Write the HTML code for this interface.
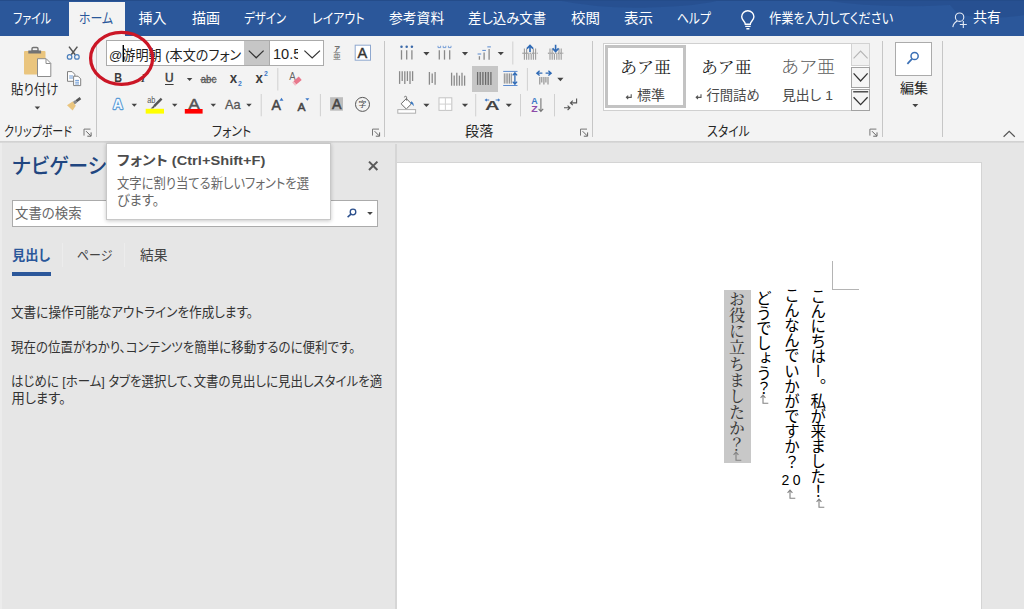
<!DOCTYPE html>
<html lang="ja"><head><meta charset="utf-8"><title>Word</title>
<style>

html,body{margin:0;padding:0}
body{width:1024px;height:609px;overflow:hidden;position:relative;background:#e6e6e6;font-family:"Liberation Sans","Noto Sans CJK JP",sans-serif;font-feature-settings:"palt" 1}
div,span,svg{position:absolute;box-sizing:border-box}
.t{white-space:nowrap;line-height:1;transform-origin:0 50%;display:block}
#hdr{left:0;top:0;width:1024px;height:36px;background:#2b579a;overflow:hidden}
#tab{left:69px;top:2px;width:56px;height:35px;background:#f3f3f3}
#rib{left:0;top:36px;width:1024px;height:105px;background:#f3f3f3}
#ribline{left:0;top:141px;width:1024px;height:2px;background:linear-gradient(#cfcfcf,#dcdcdc)}
.gs{width:1px;background:#c6c6c6;top:41px;height:96px}
.ss{width:1px;background:#d4d4d4}
#nav{left:0;top:143px;width:395px;height:466px;background:#e6e6e6;border-left:2px solid #ececec}
#navb{left:395px;top:144px;width:2px;height:465px;background:#d6d6d6}
#page{left:397px;top:162px;width:585px;height:447px;background:#fff;border-top:1px solid #d4d4d4;border-right:1px solid #d4d4d4}
#tip{left:106px;top:143px;width:225px;height:76.5px;background:#fff;border:1px solid #c8c8c8;box-shadow:0 1px 4px rgba(0,0,0,.22)}
#search{left:12px;top:200px;width:366px;height:27px;background:#fff;border:1px solid #ababab}
#navul{left:12px;top:272px;width:39px;height:4px;background:#2b579a}
#fcombo{left:106px;top:40px;width:164px;height:26px;background:#fff;border:1px solid #ababab}
#fbtn{left:244px;top:41px;width:25px;height:24px;background:#c6c6c6}
#scombo{left:269px;top:40px;width:55px;height:26px;background:#fff;border:1px solid #ababab}
#sclip{left:270px;top:42px;width:28px;height:23px;overflow:hidden}
#gal{left:603px;top:42.6px;width:267px;height:68.2px;background:#fff;border:1px solid #d0d0d0}
#gsel{left:605px;top:45px;width:81px;height:62.5px;border:3.6px solid #c3c3c3;background:#fff}
.sb{left:851px;width:19px;border:1px solid #ababab;background:#fff}
#edit{left:895px;top:42px;width:37px;height:34px;background:#fff;border:1px solid #ababab}
#jsel{left:472px;top:66px;width:26px;height:26px;background:#c6c6c6}
.vt{writing-mode:vertical-rl;white-space:nowrap;color:#000;line-height:1;font-feature-settings:normal}
.vc{writing-mode:vertical-rl;line-height:20px;width:20px;white-space:nowrap;font-feature-settings:normal;display:block}
.vc span{position:static}
.vc .tcy{display:inline-block;writing-mode:horizontal-tb;position:relative;letter-spacing:3.3px;font-size:14px;line-height:14px;height:14px;width:18px;left:-3.4px;top:-0.6px;vertical-align:middle}

</style></head>
<body>

<div id="hdr"><svg style="left:0;top:0" width="1024" height="36" viewBox="0 0 1024 36"><path d="M556 0Q600 9 650 7.5T720 0zM822 0Q880 9 950 5L958 14Q990 21 1024 15V0z" fill="#1f4580" opacity="0.35"/><path d="M0 .5H1024" stroke="#244c8a" stroke-width="1"/></svg><div id="tab"></div></div>
<div id="rib"></div>
<div id="ribline"></div>
<div class="gs" style="left:96px"></div>
<div class="gs" style="left:384px"></div>
<div class="gs" style="left:592px"></div>
<div class="gs" style="left:882px"></div>
<div class="gs" style="left:942px"></div>
<div id="fcombo"></div><div id="fbtn"></div><div id="scombo"></div>
<div id="sclip"><span class="t" style="left:3px;top:5px;font-size:14.6px;color:#222">10.5</span></div>
<div id="jsel"></div>
<div id="gal"></div><div id="gsel"></div>
<div class="sb" style="top:43px;height:23.4px;background:#f1f1f1;border-color:#d2d2d2"></div>
<div class="sb" style="top:67.2px;height:20.6px;background:#f5f5f5;border-color:#a2a2a2"></div>
<div class="sb" style="top:88.8px;height:22px;background:#f5f5f5;border-color:#a2a2a2"></div>
<div id="edit"></div>
<div id="nav"></div><div id="navb"></div>
<div id="search"></div><div id="navul"></div>
<div id="page"></div>
<svg id="ic" font-family="Liberation Sans,Noto Sans CJK JP,sans-serif" style="left:0;top:0" width="1024" height="609" viewBox="0 0 1024 609">
<g id="paste">
<rect x="24" y="51" width="21.5" height="23.5" rx="1" fill="#eac57e"/>
<path d="M32 51v-2.2q0-1.3 1.3-1.3h3.4q1.3 0 1.3 1.3V51z" fill="none" stroke="#737373" stroke-width="1.4"/>
<rect x="28.3" y="50.5" width="12.8" height="3" fill="#737373"/>
<path d="M37.5 58.7h8.7l4.6 4.6v13.2h-13.3z" fill="#fff" stroke="#8c8c8c" stroke-width="1"/>
<path d="M46 58.9v4.6h4.6" fill="none" stroke="#8c8c8c" stroke-width="1"/>
</g>
<g id="cut">
<path d="M69 46.6l6.2 8.2M77.4 46.6l-6.2 8.2" stroke="#555" stroke-width="1.5" fill="none"/>
<circle cx="69.6" cy="56.9" r="2.3" fill="none" stroke="#4a7ebb" stroke-width="1.2"/>
<circle cx="76.9" cy="56.9" r="2.3" fill="none" stroke="#4a7ebb" stroke-width="1.2"/>
</g>
<g id="copy">
<path d="M67.5 71.6h4.6l2.7 2.7v7h-7.3z" fill="#fff" stroke="#808080" stroke-width="1"/>
<path d="M69.2 76h3.8M69.2 78h3.8" stroke="#5b8fd0" stroke-width="0.9"/>
<path d="M73.6 76.2h4.4l2.7 2.7v6.7h-7.1z" fill="#fff" stroke="#808080" stroke-width="1"/>
<path d="M75.2 80.4h3.8M75.2 82.2h3.8M75.2 84h3.8" stroke="#5b8fd0" stroke-width="0.9"/>
</g>
<g id="brush">
<path d="M76.2 101.3l4.2 -3.2" stroke="#555" stroke-width="2.6" fill="none"/>
<path d="M73.7 103.2l2.6 -2" stroke="#8a8a8a" stroke-width="3.2" fill="none"/>
<path d="M67 105.2l5.6 -3.6l3.2 4.2l-3.2 4.8z" fill="#eac57e"/>
</g>

<path d="M34.65 106.50h5.50l-2.75 3.00z" fill="#444"/>
<path d="M84.0 135.6v-6.5M84.0 129.1h6.5" fill="none" stroke="#777" stroke-width="1"/><path d="M86.1 131.2l4.6 4.6m0.4 -3.4v3.8h-3.8" fill="none" stroke="#666" stroke-width="1"/>
<text x="114.2" y="82.1" font-size="12.6" fill="#3b3b3b" font-weight="700" textLength="7.8" lengthAdjust="spacingAndGlyphs" >B</text>
<text x="140.6" y="82.1" font-size="12.6" fill="#3b3b3b" font-weight="400" textLength="5.2" lengthAdjust="spacingAndGlyphs" font-style="italic" font-family="Liberation Serif,serif">I</text>
<text x="165.0" y="82.1" font-size="12.6" fill="#3b3b3b" font-weight="400" textLength="8.6" lengthAdjust="spacingAndGlyphs" stroke="#3b3b3b" stroke-width="0.5">U</text>
<path d="M165 84.5h8.6" stroke="#3b3b3b" stroke-width="1"/>
<path d="M186.85 77.90h5.50l-2.75 3.00z" fill="#444"/>
<text x="200.7" y="83.1" font-size="11.8" fill="#555" font-weight="400" textLength="15.6" lengthAdjust="spacingAndGlyphs" stroke="#555" stroke-width="0.3">abc</text>
<path d="M200.2 79.7h16.6" stroke="#555" stroke-width="0.9"/>
<text x="229.7" y="83.1" font-size="15.0" fill="#3b3b3b" font-weight="700" textLength="7.4" lengthAdjust="spacingAndGlyphs" >x</text>
<text x="238.0" y="85.6" font-size="6.5" fill="#3c78c8" font-weight="700" textLength="3.8" lengthAdjust="spacingAndGlyphs" >2</text>
<text x="255.5" y="83.1" font-size="15.0" fill="#3b3b3b" font-weight="700" textLength="7.4" lengthAdjust="spacingAndGlyphs" >x</text>
<text x="264.1" y="75.9" font-size="6.5" fill="#3c78c8" font-weight="700" textLength="3.8" lengthAdjust="spacingAndGlyphs" >2</text>
<path d="M277.8 68.0V90.5" stroke="#d0d0d0" stroke-width="1"/>
<text x="289.2" y="80.4" font-size="10.6" fill="#666" font-weight="400" textLength="6.4" lengthAdjust="spacingAndGlyphs" >A</text>
<path d="M293.4 81.2l5.4 -4.6l2.9 3.4l-5.4 4.6z" fill="#e8788c"/><path d="M292.2 82.3l1 -0.9l2.9 3.4l-1 0.9z" fill="#f4b6c0"/>
<text x="113.0" y="109.0" font-size="14.6" fill="#f2f8fe" font-weight="700" textLength="9.8" lengthAdjust="spacingAndGlyphs" stroke="#5b9bd5" stroke-width="2.3" paint-order="stroke" stroke-linejoin="round">A</text>
<path d="M131.55 103.80h5.50l-2.75 3.00z" fill="#444"/>
<text x="147.2" y="103.4" font-size="9.6" fill="#555" font-weight="400" textLength="8.2" lengthAdjust="spacingAndGlyphs" >ab</text>
<path d="M161.6 98.6l-7.4 7.6" stroke="#555" stroke-width="2.4" fill="none"/><path d="M153.8 105.4l-3.2 3.2h2.6l1.8 -1.8z" fill="#555"/>
<rect x="145.7" y="108.8" width="18.3" height="4.8" fill="#ffff00"/>
<path d="M171.95 103.80h5.50l-2.75 3.00z" fill="#444"/>
<text x="188.6" y="109.0" font-size="15.0" fill="#555" font-weight="400" textLength="11.2" lengthAdjust="spacingAndGlyphs" stroke="#555" stroke-width="0.5">A</text>
<rect x="184.8" y="109" width="17.8" height="4.6" fill="#ff0000"/>
<path d="M210.55 103.80h5.50l-2.75 3.00z" fill="#444"/>
<text x="225.1" y="108.8" font-size="13.2" fill="#555" font-weight="400" textLength="15.6" lengthAdjust="spacingAndGlyphs" stroke="#555" stroke-width="0.3">Aa</text>
<path d="M246.25 103.80h5.50l-2.75 3.00z" fill="#444"/>
<path d="M261.2 94.0V116.3" stroke="#d0d0d0" stroke-width="1"/>
<text x="271.4" y="110.4" font-size="14.7" fill="#444" font-weight="400" textLength="9.4" lengthAdjust="spacingAndGlyphs" stroke="#444" stroke-width="0.5">A</text>
<path d="M279.5 100.7l2 -3l2 3z" fill="#3c78c8"/>
<text x="297.4" y="110.7" font-size="11.6" fill="#444" font-weight="400" textLength="8.0" lengthAdjust="spacingAndGlyphs" stroke="#444" stroke-width="0.5">A</text>
<path d="M305.3 98.2h4.1l-2.05 2.6z" fill="#3c78c8"/>
<path d="M320.4 94.0V116.3" stroke="#d0d0d0" stroke-width="1"/>
<rect x="330.1" y="97.2" width="12.9" height="13.5" fill="#bdbdbd"/>
<text x="332.0" y="109.4" font-size="13.9" fill="#444" font-weight="400" textLength="9.5" lengthAdjust="spacingAndGlyphs" stroke="#444" stroke-width="0.5">A</text>
<circle cx="362.5" cy="104.4" r="7" fill="none" stroke="#555" stroke-width="1"/>
<text x="358.6" y="107.4" font-size="7.8" fill="#444" font-weight="400" >字</text>
<text x="334.3" y="50.8" font-size="6.2" fill="#555" font-weight="700" >ア</text>
<text x="332.9" y="59.3" font-size="7.8" fill="#666" font-weight="400" >亜</text>
<rect x="355.2" y="45.2" width="15.3" height="15" fill="#fff" stroke="#8fa8cf" stroke-width="1"/>
<text x="357.6" y="58.2" font-size="13.9" fill="#333" font-weight="400" textLength="9.7" lengthAdjust="spacingAndGlyphs" stroke="#333" stroke-width="0.4">A</text>
<path d="M248.8 50.6l7.4 7.2l7.4 -7.2" fill="none" stroke="#333" stroke-width="1.2"/>
<path d="M304.4 50.6l7.8 7.4l7.8 -7.4" fill="none" stroke="#333" stroke-width="1.2"/>
<path d="M123.3 45V62" stroke="#000" stroke-width="1.4"/>
<path d="M372.5 135.6v-6.5M372.5 129.1h6.5" fill="none" stroke="#777" stroke-width="1"/><path d="M374.6 131.2l4.6 4.6m0.4 -3.4v3.8h-3.8" fill="none" stroke="#666" stroke-width="1"/>
<circle cx="401.5" cy="46.8" r="1.25" fill="#3a68a8"/>
<path d="M401.5 50.2V59.6" stroke="#8a8a8a" stroke-width="1.3"/>
<circle cx="406.7" cy="46.8" r="1.25" fill="#3a68a8"/>
<path d="M406.7 50.2V59.6" stroke="#8a8a8a" stroke-width="1.3"/>
<circle cx="411.9" cy="46.8" r="1.25" fill="#3a68a8"/>
<path d="M411.9 50.2V59.6" stroke="#8a8a8a" stroke-width="1.3"/>
<path d="M423.30 52.00h6.20l-3.10 3.40z" fill="#444"/>
<path d="M438.0 45.8v1.8h2.6v-1.8" fill="none" stroke="#5b8bd0" stroke-width="0.8"/>
<path d="M439.3 50.2V59.6" stroke="#8a8a8a" stroke-width="1.3"/>
<path d="M443.2 45.8v1.8h2.6v-1.8" fill="none" stroke="#5b8bd0" stroke-width="0.8"/>
<path d="M444.5 50.2V59.6" stroke="#8a8a8a" stroke-width="1.3"/>
<path d="M448.4 45.8v1.8h2.6v-1.8" fill="none" stroke="#5b8bd0" stroke-width="0.8"/>
<path d="M449.7 50.2V59.6" stroke="#8a8a8a" stroke-width="1.3"/>
<path d="M461.90 52.00h6.20l-3.10 3.40z" fill="#444"/>
<path d="M479.4 56.2V59.7" stroke="#8a8a8a" stroke-width="1.3"/>
<path d="M477.6 54.0h3.6" stroke="#5b8bd0" stroke-width="1"/>
<path d="M484.1 52.6V59.7" stroke="#8a8a8a" stroke-width="1.3"/>
<path d="M482.3 50.4h3.6" stroke="#5b8bd0" stroke-width="1"/>
<path d="M489.1 49.1V59.7" stroke="#8a8a8a" stroke-width="1.3"/>
<path d="M487.3 46.9h3.6" stroke="#5b8bd0" stroke-width="1"/>
<path d="M497.70 51.90h6.20l-3.10 3.40z" fill="#444"/>
<path d="M512.8 41.5V64.5" stroke="#d0d0d0" stroke-width="1"/>
<path d="M522.3 53.2h15.4" stroke="#8a8a8a" stroke-width="1" stroke-dasharray="1.6 0.8"/>
<path d="M524.4 48.4V59.7" stroke="#9c9c9c" stroke-width="1.1"/>
<path d="M526.6 48.4V59.7" stroke="#9c9c9c" stroke-width="1.1"/>
<path d="M533.4 48.4V59.7" stroke="#9c9c9c" stroke-width="1.1"/>
<path d="M535.6 48.4V59.7" stroke="#9c9c9c" stroke-width="1.1"/>
<path d="M528.8 53.8V59.7" stroke="#9c9c9c" stroke-width="1.1"/>
<path d="M531.2 53.8V59.7" stroke="#9c9c9c" stroke-width="1.1"/>
<path d="M530.0 52V46.6M527.0 48.6l3 -3.2l3 3.2" fill="none" stroke="#2f6ab5" stroke-width="1.6"/>
<path d="M547.9 53.2h15.4" stroke="#8a8a8a" stroke-width="1" stroke-dasharray="1.6 0.8"/>
<path d="M550.0 48.4V59.7" stroke="#9c9c9c" stroke-width="1.1"/>
<path d="M552.2 48.4V59.7" stroke="#9c9c9c" stroke-width="1.1"/>
<path d="M559.0 48.4V59.7" stroke="#9c9c9c" stroke-width="1.1"/>
<path d="M561.2 48.4V59.7" stroke="#9c9c9c" stroke-width="1.1"/>
<path d="M554.4 53.8V59.7" stroke="#9c9c9c" stroke-width="1.1"/>
<path d="M556.8 53.8V59.7" stroke="#9c9c9c" stroke-width="1.1"/>
<path d="M555.6 44.8V50.6M552.6 48.4l3 3.2l3 -3.2" fill="none" stroke="#2f6ab5" stroke-width="1.6"/>
<path d="M399.6 71.2V83.9" stroke="#8a8a8a" stroke-width="1.3"/>
<path d="M402.2 71.2V81.0" stroke="#8a8a8a" stroke-width="1.3"/>
<path d="M404.8 71.2V83.9" stroke="#8a8a8a" stroke-width="1.3"/>
<path d="M407.4 71.2V81.0" stroke="#8a8a8a" stroke-width="1.3"/>
<path d="M410.0 71.2V83.9" stroke="#8a8a8a" stroke-width="1.3"/>
<path d="M412.6 71.2V81.0" stroke="#8a8a8a" stroke-width="1.3"/>
<path d="M429.4 72.0V84.7" stroke="#8a8a8a" stroke-width="1.3"/>
<path d="M432.2 73.6V83.0" stroke="#8a8a8a" stroke-width="1.3"/>
<path d="M435.1 72.0V84.7" stroke="#8a8a8a" stroke-width="1.3"/>
<path d="M451.6 72.7V85.7" stroke="#8a8a8a" stroke-width="1.3"/>
<path d="M454.2 75.6V85.7" stroke="#8a8a8a" stroke-width="1.3"/>
<path d="M456.8 72.7V85.7" stroke="#8a8a8a" stroke-width="1.3"/>
<path d="M459.4 75.6V85.7" stroke="#8a8a8a" stroke-width="1.3"/>
<path d="M462.0 72.7V85.7" stroke="#8a8a8a" stroke-width="1.3"/>
<path d="M464.6 75.6V85.7" stroke="#8a8a8a" stroke-width="1.3"/>
<path d="M477.6 72.0V84.9" stroke="#6a6a6a" stroke-width="1.3"/>
<path d="M480.2 72.0V84.9" stroke="#6a6a6a" stroke-width="1.3"/>
<path d="M482.9 72.0V84.9" stroke="#6a6a6a" stroke-width="1.3"/>
<path d="M485.6 72.0V84.9" stroke="#6a6a6a" stroke-width="1.3"/>
<path d="M488.2 72.0V84.9" stroke="#6a6a6a" stroke-width="1.3"/>
<path d="M490.9 72.0V84.9" stroke="#6a6a6a" stroke-width="1.3"/>
<path d="M503.2 71.4h14.3M503.2 85.5h14.3" stroke="#5b8bd0" stroke-width="1"/>
<path d="M504.3 73.4V83.6" stroke="#8a8a8a" stroke-width="1.0"/>
<path d="M506.1 73.4V83.6" stroke="#8a8a8a" stroke-width="1.0"/>
<path d="M507.8 73.4V83.6" stroke="#8a8a8a" stroke-width="1.0"/>
<path d="M509.6 73.4V83.6" stroke="#8a8a8a" stroke-width="1.0"/>
<path d="M511.3 73.4V83.6" stroke="#8a8a8a" stroke-width="1.0"/>
<path d="M514.9 73V84M512.7 75.4l2.2 -2.6l2.2 2.6M512.7 81.6l2.2 2.6l2.2 -2.6" fill="none" stroke="#2f6ab5" stroke-width="1.3"/>
<path d="M527.4 68.0V90.7" stroke="#d0d0d0" stroke-width="1"/>
<path d="M537 73.2H542.4M545.6 73.2H551M539.6 70.8l-2.8 2.4l2.8 2.4M548.4 70.8l2.8 2.4l-2.8 2.4" fill="none" stroke="#2f6ab5" stroke-width="1.3"/>
<path d="M539.8 76.9V84.4" stroke="#8a8a8a" stroke-width="1.1"/>
<path d="M541.8 76.9V82.6" stroke="#8a8a8a" stroke-width="1.1"/>
<path d="M543.9 76.9V84.4" stroke="#8a8a8a" stroke-width="1.1"/>
<path d="M545.9 76.9V82.6" stroke="#8a8a8a" stroke-width="1.1"/>
<path d="M548.0 76.9V84.4" stroke="#8a8a8a" stroke-width="1.1"/>
<path d="M557.30 77.80h6.20l-3.10 3.40z" fill="#444"/>
<path d="M406.3 98.6l5.2 5.2l-5.2 5.2l-5.2 -5.2z" fill="#fff" stroke="#666" stroke-width="1"/>
<path d="M406.6 100.6V97.4a1.1 1.1 0 1 0 -2.2 0" fill="none" stroke="#666" stroke-width="0.9"/>
<path d="M411.4 101.2q2.6 1.6 2.3 5q-1.4 -2.4 -3.6 -2.6z" fill="#3a78c0"/>
<rect x="397.8" y="109.6" width="17.8" height="3.6" fill="#fff" stroke="#b0b0b0" stroke-width="1"/>
<path d="M423.30 103.70h6.20l-3.10 3.40z" fill="#444"/>
<rect x="439" y="97.8" width="12.8" height="12.6" fill="#fff" stroke="#c4c4c4" stroke-width="1"/><path d="M445.4 97.8v12.6M439 104.1h12.8" stroke="#d0d0d0" stroke-width="1"/>
<path d="M461.90 103.70h6.20l-3.10 3.40z" fill="#444"/>
<path d="M475.7 94.0V116.4" stroke="#d0d0d0" stroke-width="1"/>
<text x="485.0" y="109.7" font-size="12.0" fill="#444" font-weight="700" textLength="14.6" lengthAdjust="spacingAndGlyphs" >A</text>
<path d="M485.8 100h3.4M486.8 98.8l-1.4 1.2l1.4 1.2M495.6 100h3.4M498 98.8l1.4 1.2l-1.4 1.2" fill="none" stroke="#4a80c8" stroke-width="1.1"/>
<path d="M505.70 103.70h6.20l-3.10 3.40z" fill="#444"/>
<path d="M520.5 94.0V116.4" stroke="#d0d0d0" stroke-width="1"/>
<text x="531.3" y="103.8" font-size="9.0" fill="#3c78c8" font-weight="700" textLength="6.4" lengthAdjust="spacingAndGlyphs" >A</text>
<text x="531.3" y="111.7" font-size="9.0" fill="#8c4aa8" font-weight="700" textLength="6.4" lengthAdjust="spacingAndGlyphs" >Z</text>
<path d="M540.9 98.2V111.2M538.6 108.8l2.3 2.6l2.3 -2.6" fill="none" stroke="#777" stroke-width="1.1"/>
<path d="M554.5 94.0V116.4" stroke="#d0d0d0" stroke-width="1"/>
<path d="M564 107.8h5.8M567.6 105.6l2.4 2.2l-2.4 2.2M576.6 98.6v4.3h-6M572.8 100.6l-2.4 2.3l2.4 2.3" fill="none" stroke="#555" stroke-width="1.1"/>
<path d="M580.5 135.6v-6.5M580.5 129.1h6.5" fill="none" stroke="#777" stroke-width="1"/><path d="M582.6 131.2l4.6 4.6m0.4 -3.4v3.8h-3.8" fill="none" stroke="#666" stroke-width="1"/>
<path d="M853.6 58.4l7 -7.4l7 7.4" fill="none" stroke="#b4b4b4" stroke-width="1.1"/>
<path d="M853.6 73.4l7 7.6l7 -7.6" fill="none" stroke="#333" stroke-width="1.3"/>
<path d="M853.2 91.8h15" stroke="#333" stroke-width="1.3"/>
<path d="M853.6 97.2l7 7.4l7 -7.4" fill="none" stroke="#333" stroke-width="1.3"/>
<path d="M631.2 94.2v3.2h-4.6M628.2 95.6l-1.8 1.7l1.8 1.7" fill="none" stroke="#555" stroke-width="1.1"/>
<path d="M701.0 94.2v3.2h-4.6M698.0 95.6l-1.8 1.7l1.8 1.7" fill="none" stroke="#555" stroke-width="1.1"/>
<path d="M869.9 135.6v-6.5M869.9 129.1h6.5" fill="none" stroke="#777" stroke-width="1"/><path d="M872.0 131.2l4.6 4.6m0.4 -3.4v3.8h-3.8" fill="none" stroke="#666" stroke-width="1"/>
<circle cx="914.6" cy="56" r="3.6" fill="none" stroke="#3a6fb5" stroke-width="1.5"/><path d="M912 58.8l-4.6 5" stroke="#3a6fb5" stroke-width="1.7"/>
<path d="M912.30 104.10h6.00l-3.00 3.20z" fill="#444"/>
<path d="M1003.6 136.8l5.6 -5.4l5.6 5.4" fill="none" stroke="#555" stroke-width="1.2"/>
<path d="M745.3 24.2c0 -2.6 -3.6 -4 -3.6 -7.4a6.1 6.1 0 0 1 12.2 0c0 3.4 -3.6 4.8 -3.6 7.4zM745.2 26.4h5.4M746.4 28.8h3" fill="none" stroke="#fff" stroke-width="1.4"/>
<circle cx="959.6" cy="17.2" r="4.2" fill="none" stroke="#e6ecf6" stroke-width="1.1"/><path d="M952.8 27.2q0.8 -4.6 4.6 -6.2M959.8 24.5h7M963.3 21v7" fill="none" stroke="#e6ecf6" stroke-width="1.1"/>
<path d="M369 161.6l8.4 8.4M377.4 161.6l-8.4 8.4" stroke="#5a5a5a" stroke-width="2"/>
<circle cx="353" cy="212" r="2.8" fill="none" stroke="#2b4f8c" stroke-width="1.3"/><path d="M351 214.1l-3.4 3" stroke="#2b4f8c" stroke-width="1.5"/>
<path d="M367.20 212.00h5.60l-2.80 3.00z" fill="#444"/>
<path d="M62.5 243V267M124.5 243V267" stroke="#ececec" stroke-width="1"/></svg>
<div id="cm1" style="left:832px;top:261px;width:1px;height:29px;background:#b4b4b4"></div>
<div id="cm2" style="left:832px;top:289px;width:27px;height:1px;background:#b4b4b4"></div>
<div id="hl" style="left:724px;top:290px;width:27px;height:173px;background:#c8c8c8"></div>
<div class="t vc" style="left:806.2px;top:287.5px;font-size:15.5px;letter-spacing:-0.49px;color:#000;font-family:'Liberation Sans','Noto Sans CJK JP',sans-serif;font-weight:400">こんにちはー。私が来ました！</div>
<div class="t vc" style="left:783.0px;top:287.2px;font-size:15.5px;letter-spacing:-0.32px;color:#000;font-family:'Liberation Sans','Noto Sans CJK JP',sans-serif;font-weight:400">こんなんでいかがですか？ <span class="tcy">20</span></div>
<div class="t vc" style="left:751.9px;top:289.7px;font-size:15.5px;letter-spacing:-0.5px;color:#000;font-family:'Liberation Sans','Noto Sans CJK JP',sans-serif;font-weight:400">どうでしょう？</div>
<div class="t vc" style="left:725.6px;top:291.0px;font-size:16px;letter-spacing:0.13px;color:#3a3a3a;font-family:'Liberation Serif','Noto Serif CJK JP','Noto Serif CJK SC',serif;font-weight:500">お役に立ちましたか？</div>
<svg class="rm" style="left:815.5px;top:498px" width="10" height="11" viewBox="0 0 10 11"><path d="M3 1V9.2H8.3M0.6 3.8L3 1L5.4 3.8" fill="none" stroke="#828282" stroke-width="1.1"/></svg>
<svg class="rm" style="left:787px;top:489px" width="10" height="11" viewBox="0 0 10 11"><path d="M3 1V9.2H8.3M0.6 3.8L3 1L5.4 3.8" fill="none" stroke="#828282" stroke-width="1.1"/></svg>
<svg class="rm" style="left:759.5px;top:394.2px" width="10" height="11" viewBox="0 0 10 11"><path d="M3 1V9.2H8.3M0.6 3.8L3 1L5.4 3.8" fill="none" stroke="#828282" stroke-width="1.1"/></svg>
<svg class="rm" style="left:733px;top:451px" width="10" height="11" viewBox="0 0 10 11"><path d="M3 1V9.2H8.3M0.6 3.8L3 1L5.4 3.8" fill="none" stroke="#828282" stroke-width="1.1"/></svg>
<span class="t" id="t0" style="left:13.21px;top:11.30px;font-size:14px;color:#fff;transform:scaleX(0.7872);">ファイル</span>
<span class="t" id="t1" style="left:79.15px;top:11.30px;font-size:14px;color:#2b579a;transform:scaleX(0.8462);">ホーム</span>
<span class="t" id="t2" style="left:138.60px;top:11.30px;font-size:14px;color:#fff;">挿入</span>
<span class="t" id="t3" style="left:192.00px;top:11.30px;font-size:14px;color:#fff;">描画</span>
<span class="t" id="t4" style="left:244.18px;top:11.30px;font-size:14px;color:#fff;transform:scaleX(0.8200);">デザイン</span>
<span class="t" id="t5" style="left:311.98px;top:11.30px;font-size:14px;color:#fff;transform:scaleX(0.8586);">レイアウト</span>
<span class="t" id="t6" style="left:388.81px;top:11.30px;font-size:14px;color:#fff;transform:scaleX(0.9852);">参考資料</span>
<span class="t" id="t7" style="left:468.04px;top:11.30px;font-size:14px;color:#fff;transform:scaleX(0.9588);">差し込み文書</span>
<span class="t" id="t8" style="left:570.57px;top:11.30px;font-size:14px;color:#fff;transform:scaleX(1.0346);">校閲</span>
<span class="t" id="t9" style="left:623.96px;top:11.30px;font-size:14px;color:#fff;transform:scaleX(1.0385);">表示</span>
<span class="t" id="t10" style="left:677.16px;top:11.30px;font-size:14px;color:#fff;transform:scaleX(0.8410);">ヘルプ</span>
<span class="t" id="t11" style="left:768.53px;top:11.30px;font-size:14px;color:#fff;transform:scaleX(0.8730);">作業を入力してください</span>
<span class="t" id="t12" style="left:973.00px;top:10.30px;font-size:14px;color:#fff;">共有</span>
<span class="t" id="t13" style="left:11.37px;top:83.30px;font-size:13.33px;color:#262626;transform:scaleX(0.9327);">貼り付け</span>
<span class="t" id="t14" style="left:4.17px;top:125.10px;font-size:13.33px;color:#262626;transform:scaleX(0.8272);">クリップボード</span>
<span class="t" id="t15" style="left:211.80px;top:125.10px;font-size:13.33px;color:#262626;transform:scaleX(0.8976);">フォント</span>
<span class="t" id="t16" style="left:465.44px;top:125.10px;font-size:13.33px;color:#262626;transform:scaleX(1.0600);">段落</span>
<span class="t" id="t17" style="left:706.90px;top:125.10px;font-size:13.33px;color:#262626;transform:scaleX(0.8957);">スタイル</span>
<span class="t" id="t18" style="left:899.50px;top:81.50px;font-size:13.33px;color:#262626;transform:scaleX(1.0577);">編集</span>
<span class="t" id="t19" style="left:108.82px;top:48.50px;font-size:13.33px;color:#222;transform:scaleX(0.9827);">@游明朝 (本文のフォン</span>
<span class="t" id="t20" style="left:14.59px;top:206.90px;font-size:13.33px;color:#666;transform:scaleX(1.0063);">文書の検索</span>
<span class="t" id="t21" style="left:11.81px;top:249.40px;font-size:13.33px;color:#2b579a;font-weight:700;transform:scaleX(0.9919);">見出し</span>
<span class="t" id="t22" style="left:76.61px;top:248.90px;font-size:13.33px;color:#444;transform:scaleX(0.8947);">ページ</span>
<span class="t" id="t23" style="left:139.50px;top:248.90px;font-size:13.33px;color:#444;transform:scaleX(1.0346);">結果</span>
<span class="t" id="t24" style="left:11.45px;top:306.10px;font-size:13.33px;color:#333;transform:scaleX(0.9470);">文書に操作可能なアウトラインを作成します。</span>
<span class="t" id="t25" style="left:11.46px;top:340.80px;font-size:13.33px;color:#333;transform:scaleX(0.9359);">現在の位置がわかり、コンテンツを簡単に移動するのに便利です。</span>
<span class="t" id="t26" style="left:11.47px;top:375.30px;font-size:13.33px;color:#333;transform:scaleX(0.9346);">はじめに [ホーム] タブを選択して、文書の見出しに見出しスタイルを適</span>
<span class="t" id="t27" style="left:11.40px;top:392.10px;font-size:13.33px;color:#333;">用します。</span>
<span class="t" id="t28" style="left:11.65px;top:155.30px;font-size:21px;color:#214680;font-weight:500;transform:scaleX(0.9459);">ナビゲーション</span>
<span class="t" id="t29" style="left:619.67px;top:59.80px;font-size:16px;color:#222;font-family:'Liberation Serif','Noto Serif CJK JP','Noto Serif CJK SC',serif;transform:scaleX(1.0644);font-feature-settings:normal;">あア亜</span>
<span class="t" id="t30" style="left:701.49px;top:59.80px;font-size:16px;color:#222;font-family:'Liberation Serif','Noto Serif CJK JP','Noto Serif CJK SC',serif;transform:scaleX(1.0533);font-feature-settings:normal;">あア亜</span>
<span class="t" id="t31" style="left:781.14px;top:59.00px;font-size:17.5px;color:#5c5c5c;font-weight:300;transform:scaleX(1.0320);font-feature-settings:normal;">あア亜</span>
<span class="t" id="t32" style="left:636.85px;top:88.90px;font-size:13.33px;color:#4a4a4a;transform:scaleX(1.0520);">標準</span>
<span class="t" id="t33" style="left:706.40px;top:88.90px;font-size:13.33px;color:#4a4a4a;">行間詰め</span>
<span class="t" id="t34" style="left:782.36px;top:88.90px;font-size:13.33px;color:#4a4a4a;transform:scaleX(1.0383);">見出し 1</span>
<div id="tip"></div>
<span class="t" id="t35" style="left:117.30px;top:153.60px;font-size:13.33px;color:#4c4c4c;font-weight:700;transform:scaleX(1.0985);">フォント (Ctrl+Shift+F)</span>
<span class="t" id="t36" style="left:117.48px;top:176.50px;font-size:13.33px;color:#666;transform:scaleX(0.9233);">文字に割り当てる新しいフォントを選</span>
<span class="t" id="t37" style="left:117.41px;top:194.00px;font-size:13.33px;color:#666;transform:scaleX(0.9900);">びます。</span>
<svg id="circ" style="left:85px;top:26px" width="75" height="65" viewBox="85 26 75 65"><ellipse cx="121.6" cy="58.3" rx="31" ry="26" fill="none" stroke="#cb1626" stroke-width="3.3"/></svg>

</body></html>
